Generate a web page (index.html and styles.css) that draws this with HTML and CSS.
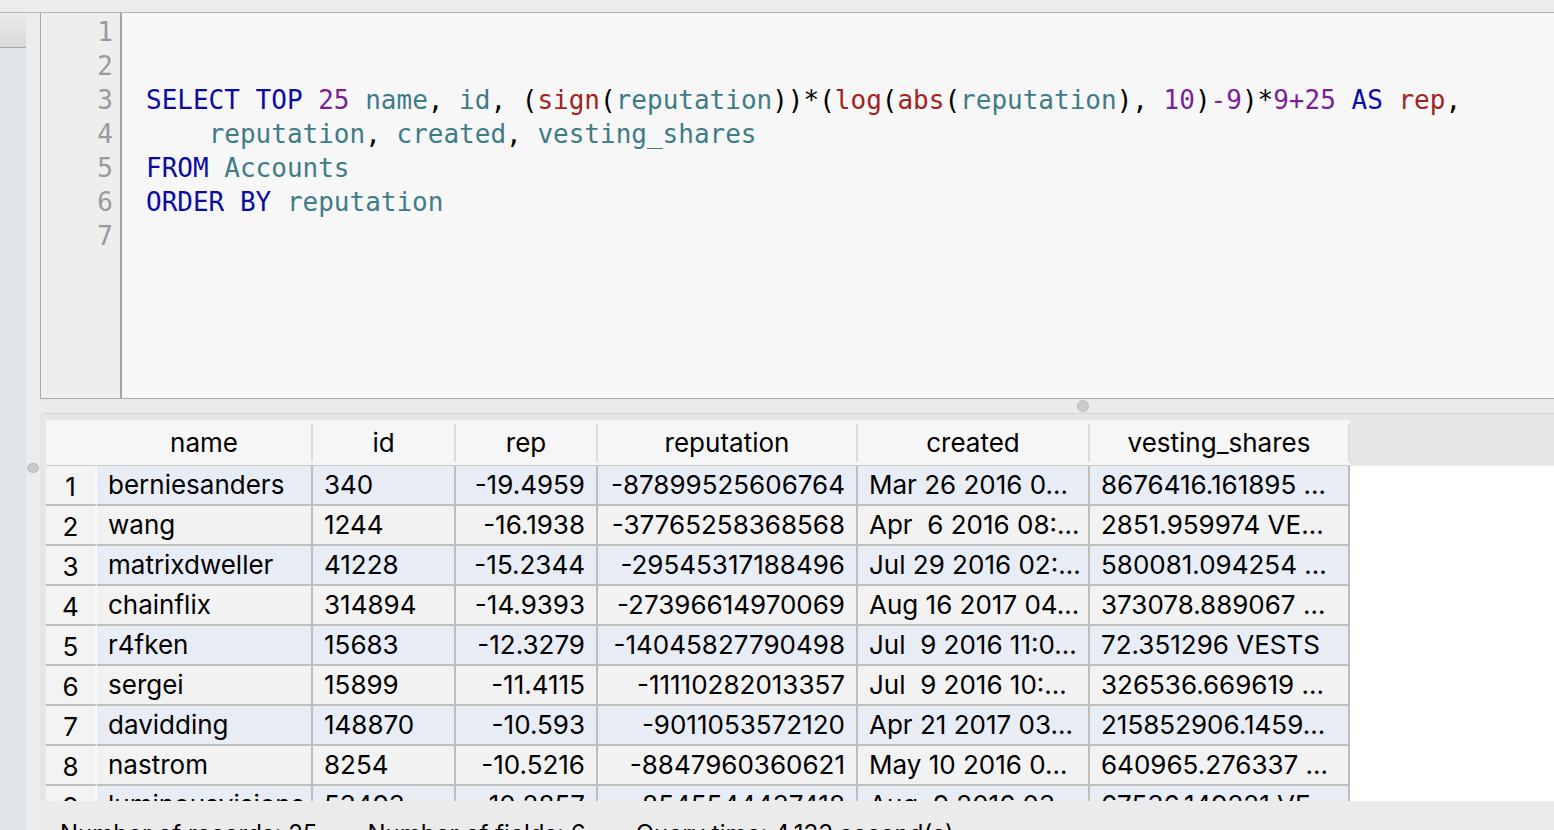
FILE: index.html
```html
<!DOCTYPE html>
<html>
<head>
<meta charset="utf-8">
<title>Query</title>
<link rel="stylesheet" href="styles.css">
</head>
<body>
<div class="topbar"></div>
<div class="main">
  <aside class="sidebar"><div class="sidebar-head"></div></aside>
  <div class="strip"><span class="vhandle"></span></div>
  <div class="content">
    <div class="editor">
      <div class="gutter">
        <div>1</div><div>2</div><div>3</div><div>4</div><div>5</div><div>6</div><div>7</div>
      </div>
      <pre class="code">


<span class="kw">SELECT</span> <span class="kw">TOP</span> <span class="num">25</span> <span class="id">name</span>, <span class="id">id</span>, (<span class="fn">sign</span>(<span class="id">reputation</span>))*(<span class="fn">log</span>(<span class="fn">abs</span>(<span class="id">reputation</span>), <span class="num">10</span>)<span class="num">-9</span>)*<span class="num">9+25</span> <span class="kw">AS</span> <span class="fn">rep</span>,
    <span class="id">reputation</span>, <span class="id">created</span>, <span class="id">vesting_shares</span>
<span class="kw">FROM</span> <span class="id">Accounts</span>
<span class="kw">ORDER BY</span> <span class="id">reputation</span>
</pre>
    </div>
    <div class="splitter"><span class="hhandle"></span></div>
    <div class="results">
      <div class="grid-head">
        <div class="hcell blank"></div>
        <div class="hcell">name</div>
        <div class="hcell">id</div>
        <div class="hcell">rep</div>
        <div class="hcell">reputation</div>
        <div class="hcell">created</div>
        <div class="hcell">vesting_shares</div>
      </div>
      <div class="grid-body">
        <div class="row odd"><div class="rn">1</div><div class="c">berniesanders</div><div class="c">340</div><div class="c r">-19.4959</div><div class="c r">-87899525606764</div><div class="c">Mar 26 2016 0…</div><div class="c">8676416.161895 …</div></div>
        <div class="row even"><div class="rn">2</div><div class="c">wang</div><div class="c">1244</div><div class="c r">-16.1938</div><div class="c r">-37765258368568</div><div class="c">Apr  6 2016 08:…</div><div class="c">2851.959974 VE…</div></div>
        <div class="row odd"><div class="rn">3</div><div class="c">matrixdweller</div><div class="c">41228</div><div class="c r">-15.2344</div><div class="c r">-29545317188496</div><div class="c">Jul 29 2016 02:…</div><div class="c">580081.094254 …</div></div>
        <div class="row even"><div class="rn">4</div><div class="c">chainflix</div><div class="c">314894</div><div class="c r">-14.9393</div><div class="c r">-27396614970069</div><div class="c">Aug 16 2017 04…</div><div class="c">373078.889067 …</div></div>
        <div class="row odd"><div class="rn">5</div><div class="c">r4fken</div><div class="c">15683</div><div class="c r">-12.3279</div><div class="c r">-14045827790498</div><div class="c">Jul  9 2016 11:0…</div><div class="c">72.351296 VESTS</div></div>
        <div class="row even"><div class="rn">6</div><div class="c">sergei</div><div class="c">15899</div><div class="c r">-11.4115</div><div class="c r">-11110282013357</div><div class="c">Jul  9 2016 10:…</div><div class="c">326536.669619 …</div></div>
        <div class="row odd"><div class="rn">7</div><div class="c">davidding</div><div class="c">148870</div><div class="c r">-10.593</div><div class="c r">-9011053572120</div><div class="c">Apr 21 2017 03…</div><div class="c">215852906.1459…</div></div>
        <div class="row even"><div class="rn">8</div><div class="c">nastrom</div><div class="c">8254</div><div class="c r">-10.5216</div><div class="c r">-8847960360621</div><div class="c">May 10 2016 0…</div><div class="c">640965.276337 …</div></div>
        <div class="row odd"><div class="rn">9</div><div class="c">luminousvisions</div><div class="c">53493</div><div class="c r">-10.2857</div><div class="c r">-8545544437418</div><div class="c">Aug  9 2016 03…</div><div class="c">67536.149221 VE…</div></div>
      </div>
    </div>
    <div class="status">
      <span class="stat">Number of records: 25</span>
      <span class="stat">Number of fields: 6</span>
      <span class="stat">Query time: 4.133 second(s)</span>
    </div>
  </div>
</div>
</body>
</html>
```
FILE: styles.css
```css
html, body {
  margin: 0;
  padding: 0;
}
body {
  width: 1554px;
  height: 830px;
  overflow: hidden;
  background: #ececec;
  font-family: Inter, "Liberation Sans", sans-serif;
  color: #000;
}
.topbar {
  height: 12px;
  background: #ececec;
  border-bottom: 1px solid #b4b4b4;
}
.main {
  display: flex;
  height: 817px;
}
.sidebar {
  width: 26px;
  flex: none;
  background: #dfe4e9;
  display: flex;
  flex-direction: column;
}
.sidebar-head {
  height: 34px;
  background: linear-gradient(#ebebeb, #d9d9d9);
  border-bottom: 1px solid #a6a6a6;
}
.strip {
  width: 14px;
  flex: none;
  background: #ececec;
  display: flex;
  flex-direction: column;
  align-items: center;
}
.vhandle {
  margin-top: 450px;
  width: 12px;
  height: 10px;
  border-radius: 50%;
  background: #c9c9c9;
  border: 1px solid #bcbcbc;
  box-sizing: border-box;
}
.content {
  flex: 1;
  display: flex;
  flex-direction: column;
  min-width: 0;
}
.editor {
  height: 385px;
  display: flex;
  border-left: 1px solid #a9a9a9;
  border-bottom: 1px solid #a9a9a9;
  background: #f7f7f7;
  flex: none;
}
.gutter {
  width: 72px;
  padding-right: 7px;
  padding-top: 2px;
  background: #eeeeee;
  border-right: 2px solid #a4a4a4;
  font-family: "DejaVu Sans Mono", "Liberation Mono", monospace;
  font-size: 26px;
  line-height: 34px;
  color: #9a9a9a;
  text-align: right;
  flex: none;
}
.code {
  margin: 0;
  padding: 2px 0 0 24px;
  font-family: "DejaVu Sans Mono", "Liberation Mono", monospace;
  font-size: 26px;
  line-height: 34px;
  color: #000;
  white-space: pre;
  flex: 1;
  overflow: hidden;
}
.kw { color: #0b0ba2; }
.num { color: #7b1f98; }
.id { color: #3e7c87; }
.fn { color: #a3221c; }
.splitter {
  height: 14px;
  flex: none;
  display: flex;
  align-items: center;
  padding-left: 1037px;
  background: #ebebeb;
}
.hhandle {
  width: 12px;
  height: 12px;
  border-radius: 50%;
  background: #cbcbcb;
  border: 1px solid #bdbdbd;
  box-sizing: border-box;
}
.results {
  height: 381px;
  flex: none;
  border-top: 1px solid #d3d3d3;
  border-top-left-radius: 6px;
  background: #e6e6e6;
  padding: 6px 0 0 6px;
  display: flex;
  flex-direction: column;
  overflow: hidden;
}
.grid-head, .row {
  display: grid;
  grid-template-columns: 51px 216px 143px 142px 260px 232px 260px;
  width: 1304px;
}
.grid-head {
  height: 45px;
  background: #f6f6f6;
  border-bottom: 1px solid #c9c9c9;
  flex: none;
}
.hcell {
  font-size: 26px;
  line-height: 45px;
  text-align: center;
  padding-right: 2px;
  background: linear-gradient(#dcdcdc, #dcdcdc) right 4px / 2px 38px no-repeat;
}
.hcell.blank {
  background: none;
}
.grid-body {
  flex: 1;
  background: #ffffff;
  overflow: hidden;
}
.row {
  height: 40px;
}
.row > div {
  box-sizing: border-box;
  border-bottom: 2px solid #bebebe;
  border-right: 2px solid #bdbdbd;
  font-size: 26px;
  line-height: 38px;
  white-space: pre;
  overflow: hidden;
}
.row.odd > .c { background: #e8ecf5; }
.row.even > .c { background: #f2f2f2; }
.row > .rn {
  background: #f3f3f3;
  border-right: 2px solid #fafafa;
  text-align: center;
  padding-top: 2px;
  line-height: 38px;
}
.c {
  padding-left: 11px;
  padding-right: 11px;
}
.c.r {
  text-align: right;
}
.status {
  height: 29px;
  flex: none;
  background: #ebebeb;
  box-sizing: border-box;
  padding: 18px 0 0 20px;
  display: flex;
  gap: 50px;
  font-size: 24px;
  line-height: 30px;
  white-space: nowrap;
  overflow: hidden;
}
```
